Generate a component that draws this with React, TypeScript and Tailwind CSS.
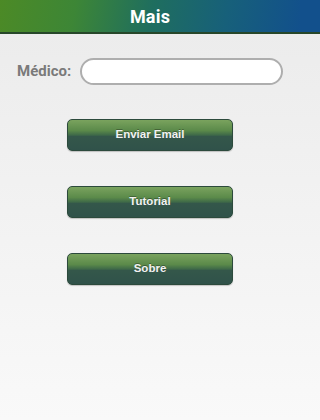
import React from 'react';

function GreenButton({ label }: { label: string }) {
  return (
    <button className="w-[166px] h-[32px] rounded-[5px] border border-[#2c4a3c] bg-[linear-gradient(to_bottom,#7aa35e_0%,#5b8a4a_35%,#3f6a48_50%,#34574a_55%,#30524a_100%)] text-[#f2f2f2] text-[11.5px] font-bold shadow-[0_1px_1px_rgba(0,0,0,0.2)] [text-shadow:0_-1px_0_rgba(0,0,0,0.3)]">
      {label}
    </button>
  );
}

export default function App() {
  return (
    <div className="w-full h-screen min-h-[420px] overflow-hidden flex flex-col bg-[linear-gradient(to_bottom,#ebebeb,#f9f9f9)] font-['Liberation_Sans',Arial,sans-serif]">
      <div className="h-[34px] shrink-0 border-b-2 border-[#27472a] bg-[#12508c]">
        <div className="w-[300px] h-full flex items-center justify-center bg-[linear-gradient(100deg,#4c8a26_0%,#3d8636_25%,#1f6e5e_50%,#17607a_75%,#12508c_100%)]">
          <h1 className="text-white text-[18px] font-bold font-['Roboto',sans-serif] tracking-[0.2px]">Mais</h1>
        </div>
      </div>
      <div className="w-[300px] flex flex-col">
        <div className="flex items-center pl-[17px] pr-[17px] mt-[24px] gap-[9px]">
          <span className="text-[#7a7a7a] text-[15px] font-bold font-['Roboto',sans-serif]">Médico:</span>
          <input size={1} className="flex-1 min-w-0 w-0 h-[27px] rounded-full border-2 border-[#aeaeae] bg-white outline-none px-3 text-sm" />
        </div>
        <div className="flex flex-col items-center gap-[35px] mt-[34px]">
          <GreenButton label="Enviar Email" />
          <GreenButton label="Tutorial" />
          <GreenButton label="Sobre" />
        </div>
      </div>
    </div>
  );
}
